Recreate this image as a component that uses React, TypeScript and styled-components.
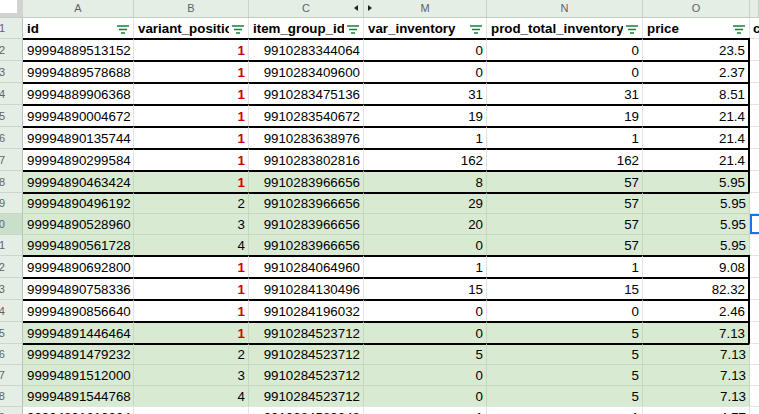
import React from "react";
import styled, { createGlobalStyle } from "styled-components";

const GlobalStyle = createGlobalStyle`
  html, body { margin: 0; padding: 0; background: #fff; overflow: hidden; }
  body { font-family: "Liberation Sans", Arial, sans-serif; }
  * { box-sizing: border-box; }
`;

const COLS = "23px 111px 115px 115px 123px 156px 107px 1fr";
const GRID = "#e2e3e3";
const GRID_GREEN = "#c6d8bf";
const HEAD_BG = "#e5eee5";
const FILL = "#d9ead3";

const Sheet = styled.div`
  width: 759px;
  height: 414px;
  overflow: hidden;
  display: flex;
  flex-direction: column;
  background: #fff;
`;

const LetterBar = styled.div`
  display: grid;
  grid-template-columns: ${COLS};
  height: 18px;
  flex: none;
  background: ${HEAD_BG};
  border-bottom: 1px solid #c3cbc3;
`;

const Corner = styled.div`
  background: #fff;
  border-right: 6px solid #d0d3d0;
  border-bottom: 4px solid #d0d3d0;
`;

const Letter = styled.div`
  position: relative;
  display: flex;
  align-items: center;
  justify-content: center;
  padding-bottom: 1px;
  border-right: 1px solid #c9d2c9;
  font-size: 11px;
  color: #5f6368;
`;

const HiddenArrow = styled.span<{ $dir: "left" | "right" }>`
  position: absolute;
  top: 5px;
  ${(p) => (p.$dir === "left" ? "right: 5px;" : "left: 4px;")}
  width: 0;
  height: 0;
  border-top: 3px solid transparent;
  border-bottom: 3px solid transparent;
  ${(p) =>
    p.$dir === "left"
      ? "border-right: 4px solid #202124;"
      : "border-left: 4px solid #202124;"}
`;

const Row = styled.div<{ $h: number }>`
  display: grid;
  grid-template-columns: ${COLS};
  height: ${(p) => p.$h}px;
  flex: none;
`;

const RowHead = styled.div<{ $sel?: boolean; $first?: boolean }>`
  display: flex;
  align-items: center;
  justify-content: flex-end;
  padding-right: 17px;
  overflow: hidden;
  background: ${(p) => (p.$sel ? "#c9dfc9" : HEAD_BG)};
  border-right: 1px solid #b9c3b9;
  border-top: ${(p) => (p.$first ? "none" : "1px solid #cdd6cd")};
  font-size: 11px;
  color: #5f6368;
  white-space: nowrap;
`;

const HeadCell = styled.div`
  display: flex;
  align-items: center;
  padding: 0 4px 0 4px;
  gap: 3px;
  border-right: 1px solid ${GRID};
  overflow: hidden;
`;

const HeadLabel = styled.span`
  flex: 1;
  min-width: 0;
  overflow: hidden;
  white-space: nowrap;
  font-size: 13.33px;
  font-weight: bold;
  color: #000;
`;

const FilterSvg = styled.svg`
  flex: none;
  margin-top: 3px;
`;

const Cell = styled.div<{
  $thick: boolean;
  $fill: boolean;
  $right: boolean;
  $edge?: boolean;
}>`
  display: flex;
  align-items: center;
  justify-content: ${(p) => (p.$right ? "flex-end" : "flex-start")};
  padding: ${(p) => (p.$right ? "0 3px 0 2px" : "0 2px 0 4px")};
  background: ${(p) => (p.$fill ? FILL : "#fff")};
  border-top: ${(p) =>
    p.$thick ? "2px solid #000" : `1px solid ${p.$fill ? GRID_GREEN : GRID}`};
  border-right: ${(p) =>
    p.$edge ? "2px solid #000" : `1px solid ${p.$fill ? GRID_GREEN : GRID}`};
  font-size: 13.33px;
  color: #000;
  white-space: nowrap;
  overflow: hidden;
`;

const Pos = styled.span<{ $first: boolean }>`
  color: ${(p) => (p.$first ? "#cc0000" : "#000")};
  font-weight: ${(p) => (p.$first ? "bold" : "normal")};
`;

const SpillCell = styled.div<{ $sel?: boolean; $header?: boolean }>`
  display: flex;
  align-items: center;
  padding-left: 3px;
  border-top: ${(p) => (p.$header ? "none" : `1px solid ${GRID}`)};
  box-shadow: ${(p) => (p.$sel ? "inset 2px 2px 0 #1a73e8, inset 0 -2px 0 #1a73e8" : "none")};
  font-size: 13.33px;
  font-weight: ${(p) => (p.$header ? "bold" : "normal")};
  overflow: hidden;
  white-space: nowrap;
`;

const FilterIcon = () => (
  <FilterSvg width="12" height="9" viewBox="0 0 12 9">
    <path d="M0 1h12M2 4.5h8M4 8h4" stroke="#188038" strokeWidth="1.3" fill="none" />
  </FilterSvg>
);

type RowData = {
  n: number;
  id: string;
  pos: string;
  group: string;
  inv: string;
  total: string;
  price: string;
  fill?: boolean;
};

const rows: RowData[] = [
  { n: 2, id: "99994889513152", pos: "1", group: "9910283344064", inv: "0", total: "0", price: "23.5" },
  { n: 3, id: "99994889578688", pos: "1", group: "9910283409600", inv: "0", total: "0", price: "2.37" },
  { n: 4, id: "99994889906368", pos: "1", group: "9910283475136", inv: "31", total: "31", price: "8.51" },
  { n: 5, id: "99994890004672", pos: "1", group: "9910283540672", inv: "19", total: "19", price: "21.4" },
  { n: 6, id: "99994890135744", pos: "1", group: "9910283638976", inv: "1", total: "1", price: "21.4" },
  { n: 7, id: "99994890299584", pos: "1", group: "9910283802816", inv: "162", total: "162", price: "21.4" },
  { n: 8, id: "99994890463424", pos: "1", group: "9910283966656", inv: "8", total: "57", price: "5.95", fill: true },
  { n: 9, id: "99994890496192", pos: "2", group: "9910283966656", inv: "29", total: "57", price: "5.95", fill: true },
  { n: 10, id: "99994890528960", pos: "3", group: "9910283966656", inv: "20", total: "57", price: "5.95", fill: true },
  { n: 11, id: "99994890561728", pos: "4", group: "9910283966656", inv: "0", total: "57", price: "5.95", fill: true },
  { n: 12, id: "99994890692800", pos: "1", group: "9910284064960", inv: "1", total: "1", price: "9.08" },
  { n: 13, id: "99994890758336", pos: "1", group: "9910284130496", inv: "15", total: "15", price: "82.32" },
  { n: 14, id: "99994890856640", pos: "1", group: "9910284196032", inv: "0", total: "0", price: "2.46" },
  { n: 15, id: "99994891446464", pos: "1", group: "9910284523712", inv: "0", total: "5", price: "7.13", fill: true },
  { n: 16, id: "99994891479232", pos: "2", group: "9910284523712", inv: "5", total: "5", price: "7.13", fill: true },
  { n: 17, id: "99994891512000", pos: "3", group: "9910284523712", inv: "0", total: "5", price: "7.13", fill: true },
  { n: 18, id: "99994891544768", pos: "4", group: "9910284523712", inv: "0", total: "5", price: "7.13", fill: true },
  { n: 19, id: "99994891610304", pos: "", group: "9910284589248", inv: "1", total: "1", price: "4.77" },
];

const headers = ["id", "variant_position", "item_group_id", "var_inventory", "prod_total_inventory", "price"];

export default function App() {
  return (
    <>
      <GlobalStyle />
      <Sheet>
        <LetterBar>
          <Corner />
          <Letter>A</Letter>
          <Letter>B</Letter>
          <Letter>
            C
            <HiddenArrow $dir="left" />
          </Letter>
          <Letter>
            <HiddenArrow $dir="right" />M
          </Letter>
          <Letter>N</Letter>
          <Letter>O</Letter>
          <Letter />
        </LetterBar>

        <Row $h={20}>
          <RowHead $first>1</RowHead>
          {headers.map((h) => (
            <HeadCell key={h}>
              <HeadLabel>{h}</HeadLabel>
              <FilterIcon />
            </HeadCell>
          ))}
          <SpillCell $header>c</SpillCell>
        </Row>

        {rows.map((r, i) => {
          const boxed = r.pos === "1";
          const prevBoxed = i > 0 && rows[i - 1].pos === "1";
          const thick = boxed || prevBoxed;
          const fill = !!r.fill;
          return (
            <Row key={r.n} $h={boxed ? 22 : 21}>
              <RowHead $sel={r.n === 10}>{r.n}</RowHead>
              <Cell $thick={thick} $fill={fill} $right={false}>{r.id}</Cell>
              <Cell $thick={thick} $fill={fill} $right>
                <Pos $first={boxed}>{r.pos}</Pos>
              </Cell>
              <Cell $thick={thick} $fill={fill} $right>{r.group}</Cell>
              <Cell $thick={thick} $fill={fill} $right>{r.inv}</Cell>
              <Cell $thick={thick} $fill={fill} $right>{r.total}</Cell>
              <Cell $thick={thick} $fill={fill} $right $edge={boxed}>{r.price}</Cell>
              <SpillCell $sel={r.n === 10} />
            </Row>
          );
        })}
      </Sheet>
    </>
  );
}
